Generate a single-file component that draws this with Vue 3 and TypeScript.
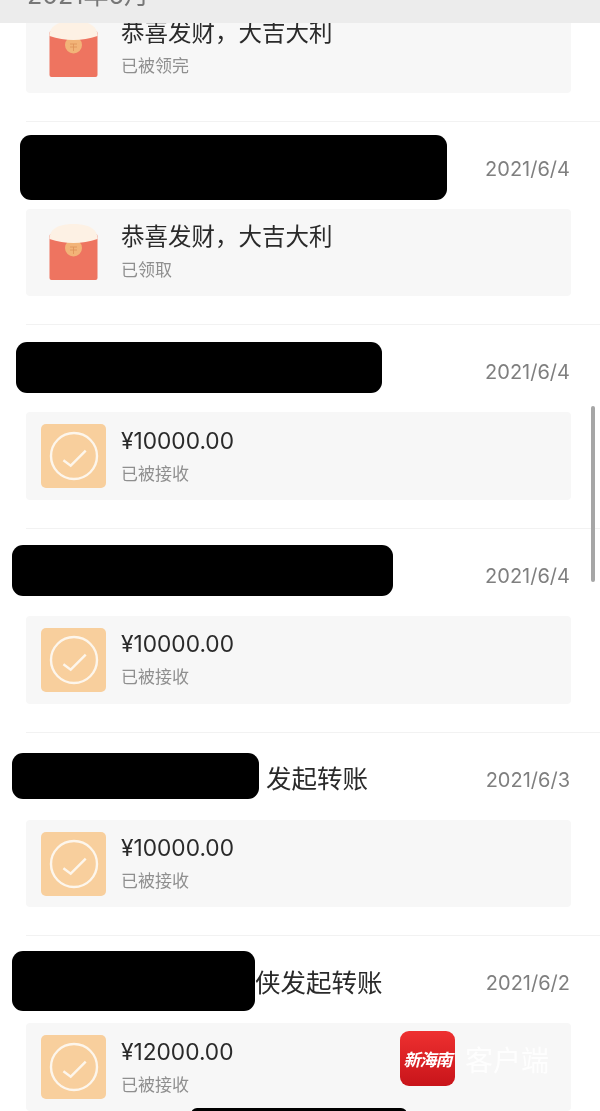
<template>
  <div class="page">
    <div class="month-bar"><span>2021年6月</span></div>

    <div class="list">
      <section v-for="(row, i) in rows" :key="i" class="row">
        <header class="row-head">
          <span class="title" :style="{ paddingLeft: row.titleLeft + 'px' }">{{ row.title }}</span>
          <span class="date">{{ row.date }}</span>
          <i
            v-if="row.mask"
            class="mask"
            :style="{ left: row.mask.left + 'px', top: row.mask.top + 'px', width: row.mask.width + 'px', height: row.mask.height + 'px' }"
          ></i>
        </header>
        <div class="card">
          <div v-if="row.kind === 'packet'" class="packet">
            <svg width="50" height="56" viewBox="0 0 50 56">
              <rect x="0.5" y="10" width="48" height="46" rx="2" fill="#ee7460" />
              <circle cx="24.5" cy="24" r="8.5" fill="#f2b478" />
              <path d="M21 23 H28 M21 26 H28 M24.5 23 V30" stroke="#dd9259" stroke-width="0.8" fill="none" />
              <path d="M0.5 15 C0 5 10 0 24.5 0 C39 0 49 5 48.5 15 Q24.5 23 0.5 15 Z" fill="#fdf1e4" />
            </svg>
          </div>
          <div v-else class="transfer">
            <svg width="50" height="50" viewBox="0 0 50 50" fill="none" stroke="#fdf6ec" stroke-width="2.4">
              <circle cx="25" cy="25" r="23" />
              <path d="M14.4 29.2 L21.7 34.7 L36.7 19.7" />
            </svg>
          </div>
          <div class="card-text">
            <div class="card-main" :class="{ amount: row.kind === 'transfer' }">{{ row.main }}</div>
            <div class="card-sub">{{ row.sub }}</div>
          </div>
        </div>
      </section>
    </div>

    <div class="scroll-thumb"></div>
    <i class="mask mask-bottom"></i>

    <div class="brand">
      <div class="brand-logo">新海南</div>
      <span class="brand-name">客户端</span>
    </div>
  </div>
</template>

<script setup lang="ts">
interface Mask {
  left: number;
  top: number;
  width: number;
  height: number;
}

interface Row {
  title: string;
  titleLeft: number;
  date: string;
  kind: 'packet' | 'transfer';
  main: string;
  sub: string;
  mask?: Mask;
}

const rows: Row[] = [
  { title: '', titleLeft: 0, date: '2021/6/4', kind: 'packet', main: '恭喜发财，大吉大利', sub: '已被领完' },
  {
    title: '',
    titleLeft: 0,
    date: '2021/6/4',
    kind: 'packet',
    main: '恭喜发财，大吉大利',
    sub: '已领取',
    mask: { left: 20, top: 13, width: 427, height: 65 }
  },
  {
    title: '',
    titleLeft: 0,
    date: '2021/6/4',
    kind: 'transfer',
    main: '¥10000.00',
    sub: '已被接收',
    mask: { left: 16, top: 17, width: 366, height: 51 }
  },
  {
    title: '',
    titleLeft: 0,
    date: '2021/6/4',
    kind: 'transfer',
    main: '¥10000.00',
    sub: '已被接收',
    mask: { left: 12, top: 16, width: 381, height: 51 }
  },
  {
    title: '发起转账',
    titleLeft: 266,
    date: '2021/6/3',
    kind: 'transfer',
    main: '¥10000.00',
    sub: '已被接收',
    mask: { left: 12, top: 20, width: 247, height: 46 }
  },
  {
    title: '侠发起转账',
    titleLeft: 255,
    date: '2021/6/2',
    kind: 'transfer',
    main: '¥12000.00',
    sub: '已被接收',
    mask: { left: 12, top: 15, width: 243, height: 60 }
  }
];
</script>

<style>
html,
body {
  margin: 0;
  background: #fff;
}
</style>

<style scoped>
.page {
  position: relative;
  width: 600px;
  height: 1111px;
  overflow: hidden;
  background: #fff;
  font-family: "Inter", "Noto Sans CJK SC", "Liberation Sans", sans-serif;
  filter: blur(0.4px);
}

.month-bar {
  position: absolute;
  top: 0;
  left: 0;
  right: 0;
  z-index: 2;
  height: 23px;
  overflow: hidden;
  background: #ececec;
}

.month-bar span {
  display: block;
  margin: -20px 0 0 27px;
  font-size: 25px;
  line-height: 30px;
  color: #777;
}

.list {
  margin-top: -82px;
}

.row {
  height: 203.7px;
  box-sizing: border-box;
  margin-left: 26px;
  border-bottom: 1px solid #f2f2f2;
}

.row-head {
  position: relative;
  display: flex;
  align-items: center;
  justify-content: space-between;
  height: 87px;
  margin-left: -26px;
  padding-right: 30px;
  font-size: 25.5px;
  color: #2a2a2a;
}

.title {
  line-height: 34px;
  padding-top: 6px;
}

.date {
  font-size: 20px;
  color: #7f7f7f;
  padding-top: 7px;
}

.mask {
  position: absolute;
  display: block;
  background: #000;
  border-radius: 11px;
}

.mask-bottom {
  left: 191px;
  top: 1108px;
  width: 216px;
  height: 12px;
}

.card {
  display: flex;
  align-items: center;
  gap: 15px;
  box-sizing: border-box;
  width: 545px;
  height: 87.5px;
  padding-left: 15px;
  background: #f7f7f7;
  border-radius: 4px;
}

.packet {
  display: flex;
  justify-content: center;
  width: 65px;
}

.transfer {
  display: flex;
  align-items: center;
  justify-content: center;
  width: 65px;
  height: 64px;
  background: #f8cf9d;
  border-radius: 5px;
}

.card-text {
  padding-bottom: 2px;
}

.card-main {
  font-size: 23.5px;
  line-height: 32px;
  color: #2a2a2a;
}

.card-main.amount {
  font-size: 22.7px;
}

.card-sub {
  font-size: 17px;
  line-height: 24px;
  margin-top: 5px;
  color: #8f8f8f;
}

.scroll-thumb {
  position: absolute;
  left: 591px;
  top: 406px;
  width: 4px;
  height: 176px;
  border-radius: 2px;
  background: #a6a6a6;
}

.brand {
  position: absolute;
  left: 400px;
  top: 1031px;
  display: flex;
  align-items: center;
  gap: 10px;
}

.brand-logo {
  display: flex;
  align-items: center;
  justify-content: center;
  width: 55px;
  height: 55px;
  border-radius: 9px;
  background: linear-gradient(#ee3030, #c8141a);
  color: #fff;
  font-size: 17px;
  font-weight: 700;
  font-style: italic;
  letter-spacing: -1px;
}

.brand-name {
  font-size: 28px;
  color: rgba(255, 255, 255, 0.85);
}
</style>
